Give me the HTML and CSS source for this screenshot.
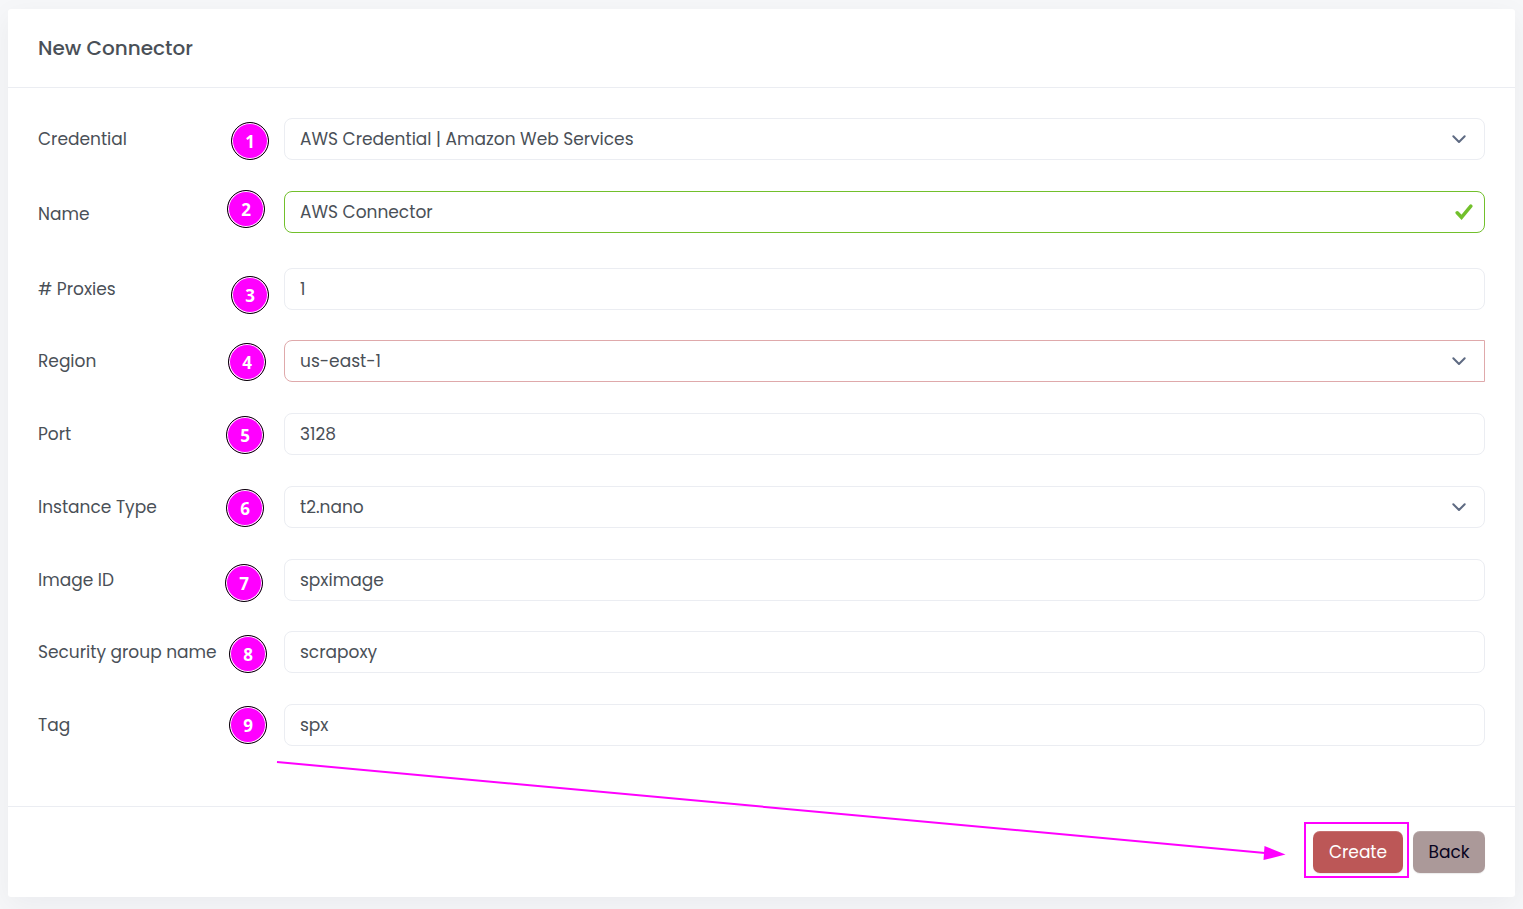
FILE: index.html
```html
<!DOCTYPE html>
<html lang="en">
<head>
<meta charset="utf-8">
<title>New Connector</title>
<link rel="stylesheet" href="styles.css">
</head>
<body>
<form class="card">
  <header class="card-header"><h1 class="title">New Connector</h1></header>
  <div class="card-body">
    <div class="row">
      <label class="label" for="credential">Credential</label>
      <span class="badge badge-1">1</span>
      <div class="field">
        <select class="control" id="credential"><option>AWS Credential | Amazon Web Services</option></select>
        <svg class="chevron" viewBox="0 0 16 16"><path d="M2.300 5.300L8 11l5.700-5.700"/></svg>
      </div>
    </div>
    <div class="row row-tall">
      <label class="label" for="name">Name</label>
      <span class="badge badge-2">2</span>
      <div class="field">
        <input class="control control-valid" id="name" type="text" value="AWS Connector">
        <svg class="tick" viewBox="0 0 18 16"><path d="M2.200 8.800L6.500 13.300 15.800 2.200"/></svg>
      </div>
    </div>
    <div class="row">
      <label class="label" for="proxies"># Proxies</label>
      <span class="badge badge-3">3</span>
      <div class="field"><input class="control" id="proxies" type="text" value="1"></div>
    </div>
    <div class="row">
      <label class="label" for="region">Region</label>
      <span class="badge badge-4">4</span>
      <div class="field">
        <select class="control control-active" id="region"><option>us-east-1</option></select>
        <svg class="chevron" viewBox="0 0 16 16"><path d="M2.300 5.300L8 11l5.700-5.700"/></svg>
      </div>
    </div>
    <div class="row">
      <label class="label" for="port">Port</label>
      <span class="badge badge-5">5</span>
      <div class="field"><input class="control" id="port" type="text" value="3128"></div>
    </div>
    <div class="row">
      <label class="label" for="instance">Instance Type</label>
      <span class="badge badge-6">6</span>
      <div class="field">
        <select class="control" id="instance"><option>t2.nano</option></select>
        <svg class="chevron" viewBox="0 0 16 16"><path d="M2.300 5.300L8 11l5.700-5.700"/></svg>
      </div>
    </div>
    <div class="row">
      <label class="label" for="image">Image ID</label>
      <span class="badge badge-7">7</span>
      <div class="field"><input class="control" id="image" type="text" value="spximage"></div>
    </div>
    <div class="row">
      <label class="label" for="group">Security group name</label>
      <span class="badge badge-8">8</span>
      <div class="field"><input class="control" id="group" type="text" value="scrapoxy"></div>
    </div>
    <div class="row">
      <label class="label" for="tag">Tag</label>
      <span class="badge badge-9">9</span>
      <div class="field"><input class="control" id="tag" type="text" value="spx"></div>
    </div>
  </div>
  <footer class="card-footer">
    <button class="btn btn-create" type="submit">Create</button>
    <button class="btn btn-back" type="button">Back</button>
  </footer>
  <svg class="arrow" viewBox="0 0 1008 102" preserveAspectRatio="none">
    <path class="arrow-line" d="M0 3L988 94"/>
    <path class="arrow-head" d="M987.500 87L1008.500 95.500 986.500 101z"/>
  </svg>
</form>
</body>
</html>
```
FILE: styles.css
```css
* { box-sizing: border-box; }

body {
  margin: 0;
  padding: 9px 8px 12px;
  background: #f6f7f9;
  color: #4a5057;
  font: 17px/24px Poppins, Inter, sans-serif;
}

.card {
  position: relative;
  display: flex;
  flex-direction: column;
  min-height: calc(100vh - 21px);
  background: #fff;
  border-radius: 3px;
  box-shadow: 0 8px 30px rgba(8, 21, 40, 0.05);
}

.card-header {
  padding: 24px 30px;
  border-bottom: 1px solid #ebedf2;
}

.title {
  margin: 0;
  font-size: 20px;
  line-height: 30px;
  font-weight: 500;
}

.card-body {
  flex: 1;
  display: flex;
  flex-direction: column;
  justify-content: space-between;
  gap: 16px;
  padding: 30px 30px 60px;
}

.row {
  position: relative;
  display: grid;
  grid-template-columns: 246px 1fr;
  align-items: center;
}

.row-tall { min-height: 46px; }
.row-tall .field { align-self: start; }

.field { position: relative; }

.control {
  display: block;
  width: 100%;
  height: 42px;
  margin: 0;
  padding: 0 48px 0 15px;
  border: 1px solid #ebedf2;
  border-radius: 8px;
  background: #fff;
  color: inherit;
  font: inherit;
  appearance: none;
  outline: none;
}

.control-valid { border-color: #72c02c; }

.control-active {
  border-color: #dfa9ab;
  border-radius: 8px 0 0 8px;
}

.chevron {
  position: absolute;
  top: 13px;
  right: 18px;
  width: 16px;
  height: 16px;
  fill: none;
  stroke: #5e6a82;
  stroke-width: 2;
  stroke-linecap: round;
  stroke-linejoin: round;
  pointer-events: none;
}

.tick {
  position: absolute;
  top: 13px;
  right: 12px;
  width: 18px;
  height: 16px;
  fill: none;
  stroke: #72c02c;
  stroke-width: 3.5;
  stroke-linecap: round;
  pointer-events: none;
}

.badge {
  position: absolute;
  width: 38px;
  height: 38px;
  border: 1px solid #000;
  border-radius: 50%;
  background: #f0f;
  box-shadow: inset 0 0 0 1px #fff;
  color: #fff;
  font: 700 17px/37px "Open Sans", "Noto Sans", sans-serif;
  text-align: center;
}

.badge-1 { left: 193px; top: 4px; }
.badge-2 { left: 189px; top: -1px; }
.badge-3 { left: 193px; top: 8px; }
.badge-4 { left: 190px; top: 3px; }
.badge-5 { left: 188px; top: 3px; }
.badge-6 { left: 188px; top: 3px; }
.badge-7 { left: 187px; top: 5px; }
.badge-8 { left: 191px; top: 4px; }
.badge-9 { left: 191px; top: 2px; }

.card-footer {
  display: flex;
  justify-content: flex-end;
  gap: 10px;
  padding: 24px 30px;
  border-top: 1px solid #ebedf2;
}

.btn {
  position: relative;
  height: 42px;
  padding: 0;
  border: 0;
  border-radius: 7px;
  font: inherit;
  box-shadow: inset 0 1px 0 rgba(255, 255, 255, 0.15), 0 1px 1px rgba(0, 0, 0, 0.08);
}

.btn-create { width: 90px; background: #bc5757; color: #fff; }
.btn-back { width: 72px; background: #ab9999; color: #080420; }

/* highlight frame around the primary action */
.btn-create::after {
  content: "";
  position: absolute;
  inset: -9px -6px -5px -9px;
  border: 2px solid #f0f;
}

.arrow {
  position: absolute;
  left: 269px;
  bottom: 36px;
  width: calc(100% - 499px);
  height: 102px;
  overflow: visible;
  pointer-events: none;
}

.arrow-line { fill: none; stroke: #f0f; stroke-width: 2; }
.arrow-head { fill: #f0f; }
```
